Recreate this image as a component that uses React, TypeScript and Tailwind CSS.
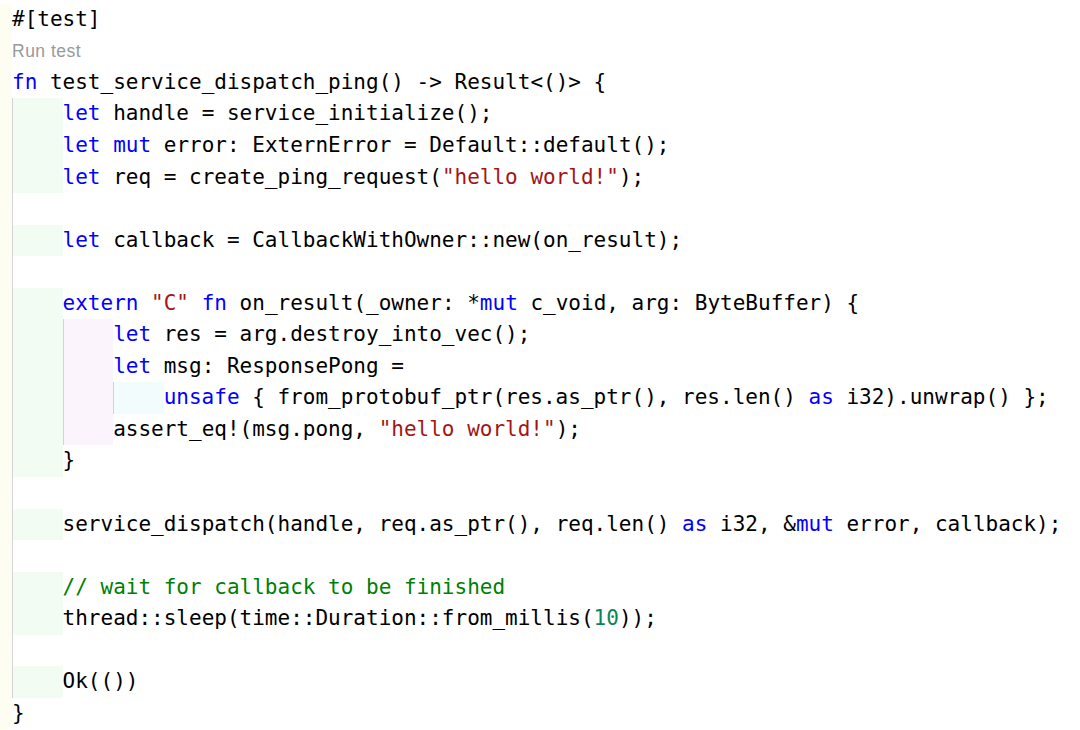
import React from 'react';

type Tok = [string, string?];

interface Line {
  level: number;
  toks: Tok[];
  guide?: boolean;
  lens?: boolean;
}

const K = 'text-[#0000ff]';
const S = 'text-[#a31515]';
const C = 'text-[#008000]';
const N = 'text-[#098658]';

const lines: Line[] = [
  { level: 0, toks: [['#[test]']] },
  { level: 0, toks: [['Run test']], lens: true },
  { level: 0, toks: [['fn', K], [' test_service_dispatch_ping() -> Result<()> {']] },
  { level: 1, toks: [['let', K], [' handle = service_initialize();']] },
  { level: 1, toks: [['let', K], [' '], ['mut', K], [' error: ExternError = Default::default();']] },
  { level: 1, toks: [['let', K], [' req = create_ping_request('], ['"hello world!"', S], [');']] },
  { level: 0, toks: [], guide: true },
  { level: 1, toks: [['let', K], [' callback = CallbackWithOwner::new(on_result);']] },
  { level: 0, toks: [], guide: true },
  {
    level: 1,
    toks: [['extern', K], [' '], ['"C"', S], [' '], ['fn', K], [' on_result(_owner: *'], ['mut', K], [' c_void, arg: ByteBuffer) {']],
  },
  { level: 2, toks: [['let', K], [' res = arg.destroy_into_vec();']] },
  { level: 2, toks: [['let', K], [' msg: ResponsePong =']] },
  {
    level: 3,
    toks: [['unsafe', K], [' { from_protobuf_ptr(res.as_ptr(), res.len() '], ['as', K], [' i32).unwrap() };']],
  },
  { level: 2, toks: [['assert_eq!(msg.pong, '], ['"hello world!"', S], [');']] },
  { level: 1, toks: [['}']] },
  { level: 0, toks: [], guide: true },
  {
    level: 1,
    toks: [['service_dispatch(handle, req.as_ptr(), req.len() '], ['as', K], [' i32, &'], ['mut', K], [' error, callback);']],
  },
  { level: 0, toks: [], guide: true },
  { level: 1, toks: [['// wait for callback to be finished', C]] },
  { level: 1, toks: [['thread::sleep(time::Duration::from_millis('], ['10', N], ['));']] },
  { level: 0, toks: [], guide: true },
  { level: 1, toks: [['Ok(())']] },
  { level: 0, toks: [['}']] },
];

// indent-rainbow tints, one per nesting level
const tints = [
  'bg-[#f3fcf3] border-l border-[#d4d4d4]',
  'bg-[#fcf4fc] border-l border-[#d4d4d4]',
  'bg-[#f2fcfc] border-l border-[#d4d4d4]',
];

export default function App() {
  return (
    <div className="w-[1080px] h-[730px] overflow-hidden bg-white pt-[3.8px] font-['DejaVu_Sans_Mono',monospace] text-[21px] text-black">
      {lines.map((line, i) => (
        <div key={i} className="flex h-[31.55px]">
          <span className="w-3 shrink-0 bg-[#fdfdf2]" />
          {tints.slice(0, line.level).map((t, j) => (
            <span key={j} className={`w-[50.57px] shrink-0 ${t}`} />
          ))}
          {line.guide && <span className="w-[50.57px] shrink-0 border-l border-[#d4d4d4]" />}
          {line.lens ? (
            <span className="font-['Liberation_Sans',Arial,sans-serif] text-[17.5px] tracking-[0.5px] leading-[33px] text-[#999999]">
              {line.toks[0][0]}
            </span>
          ) : (
            <span className="whitespace-pre leading-[31.55px]">
              {line.toks.map(([text, cls], j) => (
                <span key={j} className={cls}>
                  {text}
                </span>
              ))}
            </span>
          )}
        </div>
      ))}
    </div>
  );
}
